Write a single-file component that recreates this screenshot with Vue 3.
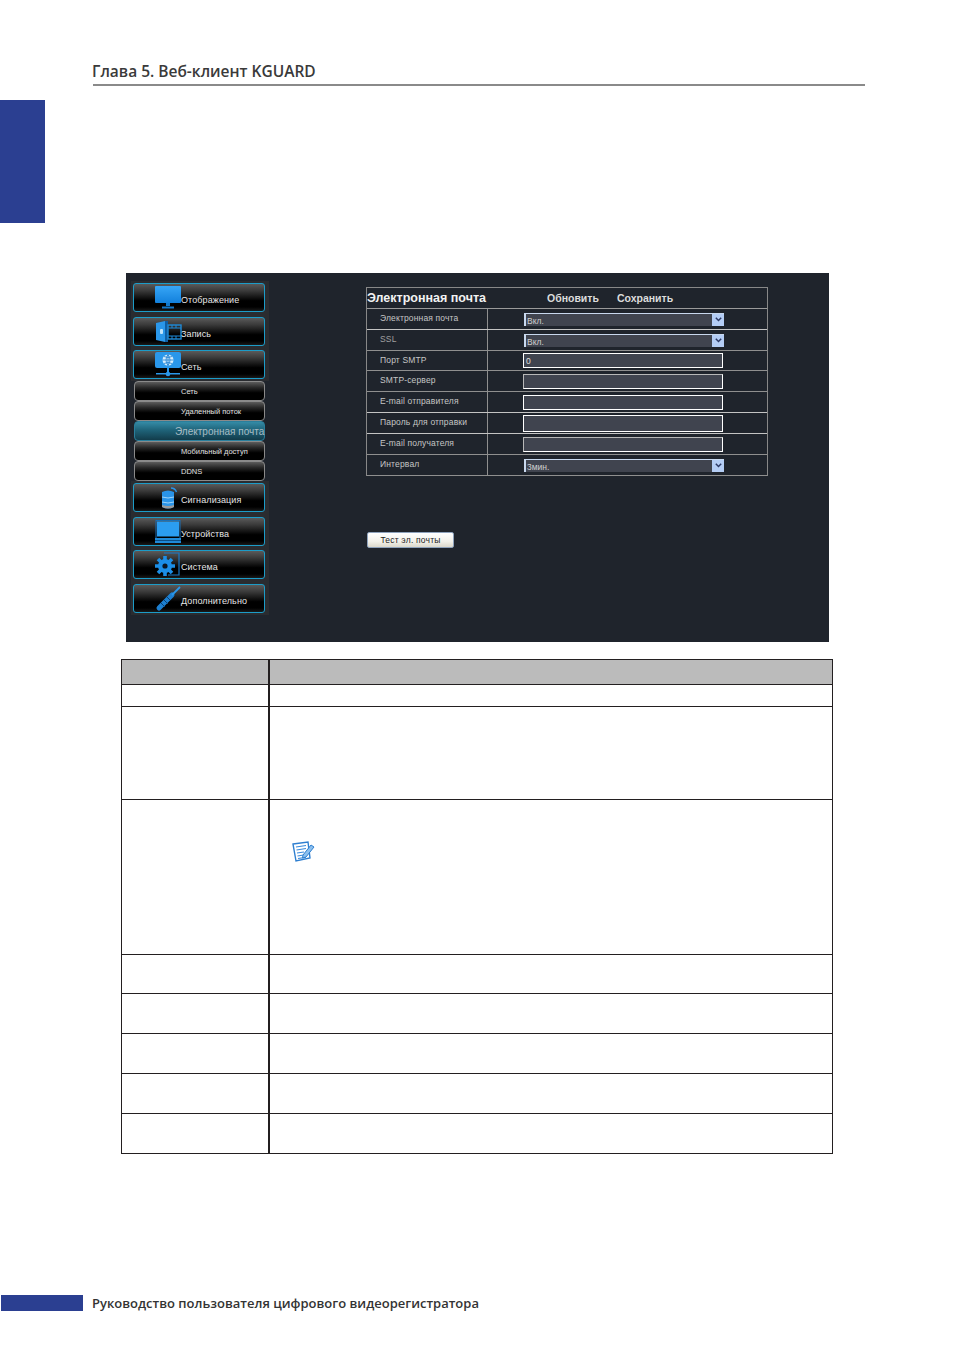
<script setup>
const firstMain = [
  { label: 'Отображение', icon: 'monitor' },
  { label: 'Запись', icon: 'record' },
  { label: 'Сеть', icon: 'network' }
]
const subs = [
  { label: 'Сеть' },
  { label: 'Удаленный поток' },
  { label: 'Электронная почта', active: true },
  { label: 'Мобильный доступ' },
  { label: 'DDNS' }
]
const secondMain = [
  { label: 'Сигнализация', icon: 'alarm' },
  { label: 'Устройства', icon: 'device' },
  { label: 'Система', icon: 'gear' },
  { label: 'Дополнительно', icon: 'tool' }
]
const fields = [
  { label: 'Электронная почта', type: 'select', value: 'Вкл.', h: 21, bright: true },
  { label: 'SSL', type: 'select', value: 'Вкл.', h: 21, dim: true },
  { label: 'Порт SMTP', type: 'input', value: '0', h: 20 },
  { label: 'SMTP-сервер', type: 'input', value: '', h: 21, soft: true },
  { label: 'E-mail отправителя', type: 'input', value: '', h: 21, bright: true },
  { label: 'Пароль для отправки', type: 'input', value: '', h: 21, bright: true, tall: true },
  { label: 'E-mail получателя', type: 'input', value: '', h: 21, soft: true },
  { label: 'Интервал', type: 'select', value: '3мин.', h: 21 }
]
const tableRows = [25, 22, 93, 155, 39, 40, 40, 40, 40]
</script>

<template>
  <div class="page">
    <header class="head"><span class="head-text">Глава 5. Веб-клиент KGUARD</span></header>
    <div class="tab"></div>

    <section class="panel">
      <nav class="menu">
        <div class="group">
          <div v-for="m in firstMain" :key="m.label" class="main-btn">
            <span class="slot">
              <svg v-if="m.icon === 'monitor'" width="26" height="23" viewBox="0 0 26 23">
                <defs><linearGradient id="g1" x1="0" y1="0" x2="0" y2="1"><stop offset="0" stop-color="#37a6f6"/><stop offset="1" stop-color="#1280dc"/></linearGradient></defs>
                <rect x="0" y="0" width="26" height="17" rx="1" fill="url(#g1)"/>
                <path d="M11 17h4v3h-4zM7 20.5h12v2H7z" fill="#1278cc"/>
              </svg>
              <svg v-else-if="m.icon === 'record'" width="25" height="21" viewBox="0 0 25 21">
                <path d="M0 2 9 0v21l-9-2z" fill="#2a97ea"/>
                <path d="M9 0h3v21H9z" fill="#0f5fa5"/>
                <rect x="4" y="8" width="3" height="5" rx="1" fill="#bfe3fb"/>
                <rect x="12" y="4" width="13" height="14" fill="none" stroke="#1f8ad8" stroke-width="1.4"/>
                <path d="M12 7h13M12 15h13M16 4v3M20 4v3M16 15v3M20 15v3" stroke="#1f8ad8"/>
              </svg>
              <svg v-else-if="m.icon === 'network'" width="26" height="25" viewBox="0 0 26 25">
                <rect x="0" y="0" width="26" height="16" rx="2" fill="#2a97ea"/>
                <circle cx="13" cy="8" r="5.5" fill="#d8eefc"/>
                <path d="M7.5 8h11M13 2.5v11M9 4.5q4 2 8 0M9 11.5q4-2 8 0M13 2.5q-4 5.500 0 11M13 2.500q4 5.500 0 11" fill="none" stroke="#1c7ed0" stroke-width=".8"/>
                <path d="M12 16h2v5h-2zM1 21h24v1.600H1z" fill="#2a97ea"/>
                <circle cx="13" cy="22" r="2.300" fill="#2a97ea"/>
              </svg>
            </span>
            <span class="main-label">{{ m.label }}</span>
          </div>
        </div>

        <div class="subs">
          <div v-for="s in subs" :key="s.label" class="sub-btn" :class="{ active: s.active }">{{ s.label }}</div>
        </div>

        <div class="group">
          <div v-for="m in secondMain" :key="m.label" class="main-btn">
            <span class="slot" :class="{ inset: m.icon === 'alarm' }">
              <svg v-if="m.icon === 'alarm'" width="16" height="22" viewBox="0 0 16 22">
                <path d="M1 5q6-3 12 0v15q-6 3-12 0z" fill="#2a94e8"/>
                <path d="M1 10q6 2 12 0M1 15q6 2 12 0" fill="none" stroke="#9fd4f8"/>
                <path d="M1 18q6 2 12 0v2q-6 3-12 0z" fill="#9a9a9a"/>
                <path d="M10 1q4 0 5.500 4" fill="none" stroke="#2a94e8" stroke-width="1.400"/>
              </svg>
              <svg v-else-if="m.icon === 'device'" width="26" height="23" viewBox="0 0 26 23">
                <rect x="1" y="0.500" width="24" height="18" fill="none" stroke="#1a6fb5"/>
                <rect x="2" y="1.500" width="22" height="15" fill="#2b9df0"/>
                <rect x="0" y="18" width="26" height="5" fill="#1f8ad8"/>
                <path d="M0 20.500h26" stroke="#0b4d85"/>
              </svg>
              <svg v-else-if="m.icon === 'gear'" width="26" height="25" viewBox="0 0 26 25">
                <path d="M9 1h15v22H13" fill="none" stroke="#1a78c6" stroke-width="1.200"/>
                <circle cx="10" cy="14" r="7" fill="#1c8ee6"/>
                <path d="M10 14 10 4M10 14 10 24M10 14 0 14M10 14 20 14M10 14 3 7M10 14 17 21M10 14 3 21M10 14 17 7" stroke="#1c8ee6" stroke-width="3.600"/>
                <circle cx="10" cy="14" r="2.600" fill="#0b1622"/>
              </svg>
              <svg v-else width="25" height="25" viewBox="0 0 25 25">
                <path d="M16 9 3 22" stroke="#1c7fd0" stroke-width="5" stroke-linecap="round"/>
                <path d="M5 17l4 4M8 14l4 4M11 11l3 3" stroke="#0b3f70"/>
                <path d="M16 9 24 1" stroke="#2a97ea" stroke-width="1.800"/>
              </svg>
            </span>
            <span class="main-label">{{ m.label }}</span>
          </div>
        </div>
      </nav>

      <div class="content">
        <div class="form">
          <div class="form-title">
            <span class="title-main">Электронная почта</span>
            <span class="title-act first">Обновить</span>
            <span class="title-act">Сохранить</span>
          </div>
          <div
            v-for="f in fields"
            :key="f.label"
            class="form-row"
            :class="{ bright: f.bright }"
            :style="{ height: f.h + 'px' }"
          >
            <div class="form-label" :class="{ dim: f.dim }">{{ f.label }}</div>
            <div class="form-cell">
              <div v-if="f.type === 'select'" class="sel">
                <span class="sel-val">{{ f.value }}</span>
                <span class="sel-btn">
                  <svg width="7" height="5" viewBox="0 0 7 5"><path d="M.8.8 3.500 3.500 6.200.8" fill="none" stroke="#2c3a66" stroke-width="1.500"/></svg>
                </span>
              </div>
              <div v-else class="inp" :class="{ soft: f.soft, tall: f.tall }">{{ f.value }}</div>
            </div>
          </div>
        </div>
        <div class="test-btn">Тест эл. почты</div>
      </div>
    </section>

    <section class="table">
      <div
        v-for="(h, i) in tableRows"
        :key="i"
        class="t-row"
        :class="{ 'is-head': i === 0 }"
        :style="{ height: h + 'px' }"
      >
        <div class="t-left"></div>
        <div class="t-right">
          <svg v-if="i === 3" class="note" width="23" height="22" viewBox="0 0 23 22">
            <path d="M1 3 16 1l2 16-14 3z" fill="#fff" stroke="#2f7fd0" stroke-width="1.400"/>
            <path d="M4 6l10-1.500M4.500 9 14 7.500M5 12l7-1M5.500 15l6-1M6 17.500l8-1.200" stroke="#3b8bdc" stroke-width="1.200"/>
            <path d="M11 14 19 4l3 2-8 10-3.500 1z" fill="#8cc0ee" stroke="#2f7fd0"/>
          </svg>
        </div>
      </div>
    </section>

    <footer class="foot">
      <div class="foot-bar"></div>
      <span class="foot-text">Руководство пользователя цифрового видеорегистратора</span>
    </footer>
  </div>
</template>

<style scoped>
.page {
  width: 954px;
  height: 1350px;
  background: #fff;
  overflow: hidden;
  display: flex;
  flex-direction: column;
  align-items: flex-start;
  font-family: "Liberation Sans", Arial, sans-serif;
}
.head {
  width: 772px;
  height: 24px;
  margin: 60px 0 0 93px;
  border-bottom: 2px solid #8a8a8a;
}
.head-text {
  display: block;
  margin-left: -1px;
  font: 600 15.5px/22px "Open Sans", sans-serif;
  color: #3a3a3a;
  white-space: nowrap;
}
.tab {
  width: 45px;
  height: 123px;
  margin-top: 14px;
  background: #2b3f91;
}
.panel {
  width: 703px;
  height: 369px;
  margin: 50px 0 0 126px;
  background: #1f242c;
  display: flex;
  align-items: flex-start;
  padding: 8px 0 0 5px;
  box-sizing: border-box;
}
.menu {
  width: 138px;
  display: flex;
  flex-direction: column;
}
.group {
  background: #2a2c30;
  padding: 2px 4px 2px 2px;
  display: flex;
  flex-direction: column;
  gap: 4.5px;
}
.main-btn {
  height: 29px;
  box-sizing: border-box;
  border: 1px solid #1c9cc8;
  border-radius: 3px;
  background: linear-gradient(#5a5a5a 0%, #3a3a3a 25%, #000 62%, #000 85%, #1a1a1a 100%);
  display: flex;
  align-items: center;
}
.slot {
  width: 47px;
  flex: none;
  display: flex;
  justify-content: flex-end;
  align-items: center;
  height: 27px;
}
.slot.inset { padding-right: 4px; box-sizing: border-box; }
.slot svg { display: block; flex: none; overflow: visible; }
.main-label {
  font-size: 9px;
  color: #e6e6e6;
  letter-spacing: 0.1px;
  padding-top: 5px;
  white-space: nowrap;
}
.subs {
  display: flex;
  flex-direction: column;
  padding-left: 3px;
}
.sub-btn {
  width: 131px;
  height: 20px;
  box-sizing: border-box;
  border: 1px solid #8a8a8a;
  border-radius: 4px;
  background: linear-gradient(#5c5c5c 0%, #2a2a2a 30%, #000 60%, #000 100%);
  color: #e0e0e0;
  font-size: 7.5px;
  line-height: 19px;
  padding-left: 46px;
  white-space: nowrap;
}
.sub-btn.active {
  border: 1px solid #2a7f9c;
  background: linear-gradient(#358ba6 0%, #1f6379 45%, #123c4b 100%);
  color: #a9bcc4;
  font-size: 10px;
  padding-left: 40px;
}
.content {
  margin: 6px 0 0 97px;
  display: flex;
  flex-direction: column;
  align-items: flex-start;
}
.form {
  width: 402px;
  box-sizing: border-box;
  border: 1px solid #888;
  border-bottom: none;
}
.form-title {
  height: 21px;
  box-sizing: border-box;
  border-bottom: 1px solid #9a9a9a;
  display: flex;
  align-items: center;
  white-space: nowrap;
}
.title-main {
  width: 180px;
  font-weight: 700;
  font-size: 12.5px;
  color: #f2f2f2;
}
.title-act {
  font-weight: 700;
  font-size: 10.5px;
  color: #dcdcdc;
  margin-left: 18px;
}
.title-act.first { margin-left: 0; }
.form-row {
  box-sizing: border-box;
  border-bottom: 1px solid #8f8f8f;
  display: flex;
}
.form-row.bright { border-bottom-color: #c4c4c4; }
.form-label {
  width: 121px;
  box-sizing: border-box;
  border-right: 1px solid #8f8f8f;
  padding: 4px 0 0 13px;
  font-size: 8.5px;
  line-height: 11px;
  letter-spacing: 0.15px;
  color: #c6c6c6;
  white-space: nowrap;
}
.form-label.dim { color: #a0a0a0; }
.form-cell {
  flex: 1;
  display: flex;
  align-items: center;
  padding-left: 35px;
}
.sel {
  width: 200px;
  height: 13px;
  margin-left: 1px;
  box-sizing: border-box;
  border-top: 1px solid #c8d8ee;
  border-left: 2px solid #c8d8ee;
  background: #40444f;
  display: flex;
  justify-content: space-between;
  overflow: hidden;
}
.sel-val {
  font-size: 8.5px;
  line-height: 14px;
  color: #d0d0d0;
  padding-left: 1px;
}
.sel-btn {
  width: 12px;
  background: #b4cdf5;
  display: flex;
  align-items: center;
  justify-content: center;
}
.inp {
  width: 200px;
  height: 15px;
  box-sizing: border-box;
  border: 1px solid #fff;
  border-width: 1px 1px 1px 1px;
  background: #40444f;
  font-size: 8.5px;
  line-height: 15px;
  color: #e0e0e0;
  padding-left: 2px;
}
.inp.soft { border-color: #b8b8b8 #fff #fff #b8b8b8; }
.inp.tall { height: 17px; }
.test-btn {
  margin: 56px 0 0 1px;
  width: 87px;
  height: 16px;
  box-sizing: border-box;
  border: 1px solid #8fa3bd;
  border-radius: 2px;
  background: linear-gradient(#fff, #f2f1ea 60%, #dcd9cc);
  color: #222;
  font-size: 8.5px;
  line-height: 14px;
  letter-spacing: 0.2px;
  text-align: center;
}
.table {
  width: 712px;
  margin: 17px 0 0 121px;
  box-sizing: border-box;
  border: 1px solid #231f20;
  border-width: 1px 1px 0 1px;
}
.t-row {
  display: flex;
  box-sizing: border-box;
  border-bottom: 1px solid #231f20;
}
.t-row.is-head { background: #bbb; }
.t-left {
  width: 146px;
  flex: none;
  border-right: 2px solid #231f20;
}
.t-right {
  flex: 1;
  position: relative;
  padding: 41px 0 0 22px;
}
.note { display: block; }
.foot {
  margin-top: 141px;
  display: flex;
  align-items: center;
  padding-left: 1px;
}
.foot-bar {
  width: 82px;
  height: 16px;
  background: #2b3f91;
}
.foot-text {
  margin-left: 9px;
  font: 600 13px/16px "Open Sans", sans-serif;
  color: #333;
  white-space: nowrap;
}
</style>

<style>
html, body { margin: 0; background: #fff; }
</style>
